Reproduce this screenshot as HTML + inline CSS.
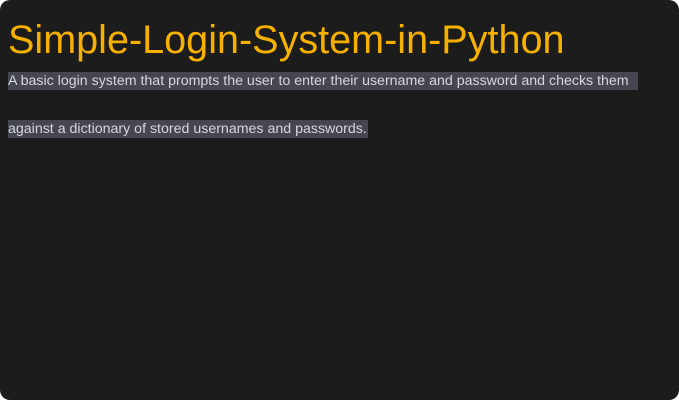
<!DOCTYPE html>
<html><head><style>
html,body{margin:0;padding:0;background:#fff;}
.card{width:679px;height:400px;background:#1c1c1c;border-radius:10px;position:relative;overflow:hidden;}
h1{position:absolute;left:8px;top:16px;margin:0;font:39.6px "Liberation Sans",sans-serif;color:#f5b000;line-height:48px;white-space:nowrap;}
.l{position:absolute;left:8px;font:14.2px "Liberation Sans",sans-serif;color:#d6d6dc;background:#45464f;line-height:18px;height:18px;white-space:nowrap;padding-right:1px;}
</style></head><body>
<div class="card">
<h1>Simple-Login-System-in-Python</h1>
<div class="l" style="top:72px;padding-right:5px">A basic login system that prompts the user to enter their username and password and checks them&nbsp;</div>
<div class="l" style="top:120px">against a dictionary of stored usernames and passwords.</div>
</div>
</body></html>
